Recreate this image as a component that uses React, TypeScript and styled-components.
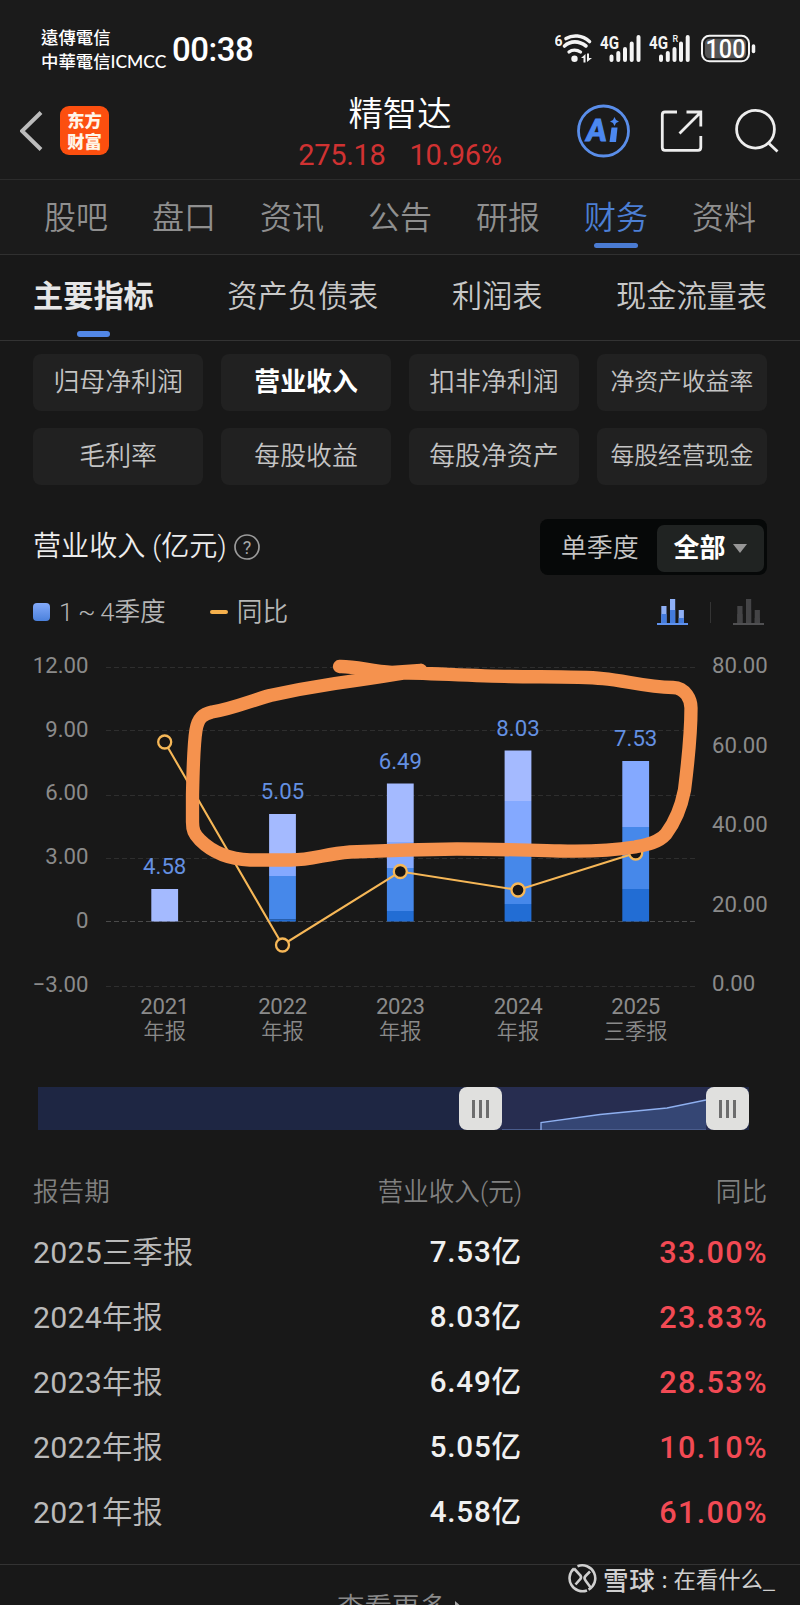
import React, { useState } from 'react'
import styled, { createGlobalStyle } from 'styled-components'

const GlobalStyle = createGlobalStyle`
  * {
    box-sizing: border-box;
  }
  body {
    margin: 0;
    background: #181818;
  }
`

const Page = styled.div`
  position: relative;
  width: 800px;
  height: 1605px;
  overflow: hidden;
  background: #181818;
  color: #c4c4c4;
  font-family: Roboto, 'Noto Sans CJK SC', sans-serif;
  font-weight: 400;
  white-space: nowrap;
`

const StatusBar = styled.div`
  display: flex;
  align-items: center;
  height: 98px;
  padding: 0 43px 0 41px;
  background: #1b1b1b;
  color: #fff;
`

const Carrier = styled.div`
  width: 131px;
  font-family: Lato, 'Noto Sans CJK TC', sans-serif;
  font-size: 17.4px;
  font-weight: 500;
  line-height: 24px;
  padding-top: 2px;
`

const Clock = styled.div`
  flex: 1;
  font-size: 33px;
  font-weight: 500;
  line-height: 40px;
  letter-spacing: -0.5px;
  padding-top: 2px;
`

const HeaderBar = styled.header`
  display: grid;
  grid-template-columns: 204px 1fr 204px;
  grid-template-rows: 65px;
  align-items: center;
  height: 82px;
  padding: 0 20px;
  background: #1b1b1b;
  border-bottom: 1px solid #2c2c2c;
`

const HeaderLeft = styled.div`
  display: flex;
  align-items: center;
  gap: 17px;
`

const BrandLogo = styled.div`
  display: grid;
  place-content: center;
  width: 49px;
  height: 49px;
  border-radius: 9px;
  padding-bottom: 2px;
  background: #fc4f0f;
  color: #fff5e8;
  font-family: 'Noto Sans CJK SC', sans-serif;
  font-size: 17.3px;
  font-weight: 900;
  line-height: 21px;
`

const StockTitle = styled.div`
  display: flex;
  flex-direction: column;
  align-items: center;
  padding-top: 7px;
`

const StockName = styled.div`
  color: #fff;
  font-size: 34.3px;
  font-weight: 350;
  line-height: 41px;
`

const StockQuote = styled.div`
  display: flex;
  gap: 24px;
  color: #d03232;
  font-size: 29px;
  font-weight: 400;
  line-height: 40px;
  letter-spacing: -0.3px;
`

const HeaderRight = styled.div`
  display: flex;
  justify-content: flex-end;
  align-items: center;
`

const MainTabs = styled.nav`
  display: flex;
  height: 75px;
  padding: 0 22px;
  background: #1b1b1b;
  border-bottom: 1px solid #303030;
`

const MainTab = styled.div<{ active?: boolean }>`
  flex: 1;
  display: flex;
  flex-direction: column;
  align-items: center;
  color: ${(props) => (props.active ? '#4c7fd4' : '#8f8f8f')};
  font-size: 32px;
  font-weight: 350;
  line-height: 63px;
  padding-top: 7px;
  height: 74px;

  &::after {
    content: '';
    width: 44px;
    height: 5px;
    margin-top: -7px;
    border-radius: 3px;
    background: ${(props) => (props.active ? '#4a7bd2' : 'transparent')};
  }
`

const SubTabs = styled.nav`
  display: flex;
  justify-content: space-between;
  height: 86px;
  padding: 5px 33px 0;
  border-bottom: 1px solid #333;
`

const SubTab = styled.div<{ active?: boolean }>`
  display: flex;
  flex-direction: column;
  align-items: center;
  color: ${(props) => (props.active ? '#e6e6e6' : '#c8c8c8')};
  font-size: 30.2px;
  font-weight: ${(props) => (props.active ? 700 : 350)};
  line-height: 74px;

  &::after {
    content: '';
    width: 33px;
    height: 6px;
    margin-top: -3px;
    border-radius: 4px;
    background: ${(props) => (props.active ? '#5288e8' : 'transparent')};
  }
`

const ChipGrid = styled.div`
  display: grid;
  grid-template-columns: repeat(4, 1fr);
  gap: 17px 17.5px;
  padding: 13px 33px 0;
`

const Chip = styled.div<{ active?: boolean; small?: boolean }>`
  height: 57px;
  border-radius: 8px;
  background: #212121;
  color: ${(props) => (props.active ? '#fff' : '#c4c4c4')};
  font-size: ${(props) => (props.small ? '23.8px' : '25.9px')};
  font-weight: ${(props) => (props.active ? 700 : 350)};
  line-height: 56px;
  text-align: center;
`

const SectionHead = styled.div`
  display: flex;
  align-items: center;
  height: 56px;
  margin: 34px 33px 0;
`

const SectionTitle = styled.div`
  color: #ececec;
  font-size: 28.1px;
  font-weight: 350;
  line-height: 54px;
  margin-right: 7px;
`

const PeriodSwitch = styled.div`
  display: flex;
  width: 227px;
  height: 56px;
  margin-left: auto;
  padding: 5.5px 3.5px 3.5px 0;
  border-radius: 8px;
  background: #060808;
`

const PeriodOption = styled.div<{ active?: boolean }>`
  display: flex;
  justify-content: center;
  align-items: center;
  gap: 7px;
  width: ${(props) => (props.active ? '107px' : '117px')};
  padding-left: ${(props) => (props.active ? '0' : '3px')};
  border-radius: 7px;
  background: ${(props) => (props.active ? '#202322' : 'transparent')};
  color: ${(props) => (props.active ? '#fff' : '#c6c6c6')};
  font-size: 26px;
  font-weight: ${(props) => (props.active ? 700 : 350)};
  line-height: 47px;
`

const Caret = styled.span`
  border: 7px solid transparent;
  border-top: 9px solid #969696;
  border-bottom: 0;
`

const Legend = styled.div`
  display: flex;
  align-items: center;
  height: 74px;
  padding: 0 33px;
  color: #b6b6b6;
  font-size: 25.7px;
  font-weight: 350;
`

const LegendText = styled.span`
  line-height: 30px;
  word-spacing: -1.6px;
  margin-top: -1px;
`

const BarSwatch = styled.span`
  width: 17px;
  height: 18px;
  margin-right: 9px;
  border-radius: 4px;
  background: linear-gradient(#83aafa, #4b81dc);
`

const LineSwatch = styled.span`
  width: 18px;
  height: 4px;
  margin: 0 9px 0 44px;
  border-radius: 2px;
  background: #f5b04c;
`

const ModeIcons = styled.div`
  display: flex;
  align-items: center;
  margin-left: auto;
  margin-right: 3px;
`

const ModeDivider = styled.span`
  width: 1px;
  height: 21px;
  margin: 0 22px;
  background: #343434;
`

const ChartSvg = styled.svg`
  display: block;
  font-size: 22.2px;
  font-weight: 400;
  fill: #8a8a8a;
`

const Slider = styled.div`
  display: flex;
  height: 43px;
  margin: 38px 51px 0 38px;
  background: #1e2643;
`

const SliderRest = styled.div`
  width: 421px;
`

const SliderWindow = styled.div`
  width: 204px;
  margin: 0 -8px;
  background: #272d50;
  box-sizing: content-box;
  padding: 0 8px;
`

const SliderHandle = styled.div`
  z-index: 1;
  display: flex;
  justify-content: center;
  align-items: center;
  gap: 4.5px;
  width: 43px;
  height: 43px;
  border-radius: 8px;
  background: #e0e0de;

  span {
    width: 2.5px;
    height: 18px;
    background: #6d6d6d;
  }
`

const ReportTable = styled.div`
  margin: 31px 33px 0;
`

const TableRow = styled.div`
  display: grid;
  grid-template-columns: 220px 269px 1fr;
  height: 65px;
  font-size: 30px;
  line-height: 69px;
`

const TableHead = styled(TableRow)`
  height: 57px;
  color: #808080;
  font-size: 25.6px;
  font-weight: 350;
  line-height: 63px;
`

const Cell = styled.div`
  text-align: right;
  &:first-child {
    text-align: left;
  }
`

const PeriodCell = styled(Cell)`
  color: #bababa;
  font-weight: 350;
  font-size: 30.3px;
  letter-spacing: 0.2px;
`

const Year = styled.span`
  font-weight: 400;
`

const AmountCell = styled(Cell)`
  color: #f0f0f0;
  font-size: 29.6px;
  font-weight: 500;
  letter-spacing: 0.8px;
`

const RatioCell = styled(Cell)`
  color: #f24a54;
  font-size: 30.7px;
  font-weight: 500;
  letter-spacing: 1.3px;
  margin-right: -1px;
`

const Footer = styled.footer`
  display: flex;
  justify-content: center;
  align-items: center;
  gap: 8px;
  height: 80px;
  margin-top: 21px;
  border-top: 1px solid #333;
  color: #8a8a8a;
  font-size: 27.5px;
  font-weight: 350;
`

const Watermark = styled.div`
  position: absolute;
  left: 568px;
  top: 1560px;
  display: flex;
  align-items: center;
  height: 36px;
  color: #cfcfcf;
  font-family: 'Noto Sans CJK SC', sans-serif;
  font-size: 22.3px;
  line-height: 35px;
`

const WatermarkBrand = styled.span`
  margin-left: 5px;
  font-size: 25.5px;
  font-weight: 500;
  letter-spacing: 0.8px;
`

const WatermarkColon = styled.span`
  width: 18px;
  text-align: center;
`

const tabs = ['股吧', '盘口', '资讯', '公告', '研报', '财务', '资料']
const subTabs = ['主要指标', '资产负债表', '利润表', '现金流量表']
const indicators = [
  '归母净利润',
  '营业收入',
  '扣非净利润',
  '净资产收益率',
  '毛利率',
  '每股收益',
  '每股净资产',
  '每股经营现金',
]

const Q1 = '#226dd4'
const Q2 = '#4688ea'
const Q3 = '#84a9ff'
const Q4 = '#a4baff'

type Segment = [top: number, color: string]
type Report = {
  year: string
  kind: string
  x: number
  value: string
  ratio: string
  pointY: number
  segments: Segment[]
}

// segments run from top to bottom, each one ends where the next one starts
const reports: Report[] = [
  { year: '2021', kind: '年报', x: 164.7, value: '4.58', ratio: '61.00%', pointY: 742, segments: [[889, Q4]] },
  {
    year: '2022',
    kind: '年报',
    x: 282.5,
    value: '5.05',
    ratio: '10.10%',
    pointY: 945,
    segments: [[814, Q4], [857, Q3], [876, Q2], [919.5, Q1]],
  },
  {
    year: '2023',
    kind: '年报',
    x: 400.3,
    value: '6.49',
    ratio: '28.53%',
    pointY: 871.5,
    segments: [[783.5, Q4], [842, Q3], [868, Q2], [911, Q1]],
  },
  {
    year: '2024',
    kind: '年报',
    x: 518,
    value: '8.03',
    ratio: '23.83%',
    pointY: 890,
    segments: [[750.5, Q4], [801, Q3], [850, Q2], [904, Q1]],
  },
  {
    year: '2025',
    kind: '三季报',
    x: 635.7,
    value: '7.53',
    ratio: '33.00%',
    pointY: 853,
    segments: [[761, Q3], [827, Q2], [889, Q1]],
  },
]

const gridLines = [667.5, 730.5, 795.5, 858.5, 921.5, 986.5]
const leftAxis = ['12.00', '9.00', '6.00', '3.00', '0', '−3.00']
const rightAxis = ['80.00', '60.00', '40.00', '20.00', '0.00']

const Chart = () => (
  <ChartSvg width="800" height="400" viewBox="0 649 800 400">
    {gridLines.map((y, index) => (
      <line
        key={y}
        x1="106"
        x2="695"
        y1={y}
        y2={y}
        stroke={index === 4 ? '#4a4a4a' : '#2e2e2e'}
        strokeDasharray="5 3"
      />
    ))}
    {leftAxis.map((label, index) => (
      <text key={label} x="88.5" y={673 + index * 63.7} textAnchor="end">
        {label}
      </text>
    ))}
    {rightAxis.map((label, index) => (
      <text key={label} x="712" y={673 + index * 79.6}>
        {label}
      </text>
    ))}
    {reports.map(({ x, segments }) =>
      segments.map(([top, color], index) => {
        const bottom = segments[index + 1] ? segments[index + 1][0] : 921.5
        return <rect key={`${x}-${top}`} x={x - 13.4} y={top} width="26.8" height={bottom - top} fill={color} />
      })
    )}
    <polyline
      points={reports.map(({ x, pointY }) => `${x},${pointY}`).join(' ')}
      fill="none"
      stroke="#f6b757"
      strokeWidth="2.1"
    />
    {reports.map(({ x, pointY }) => (
      <circle key={x} cx={x} cy={pointY} r="6.5" fill="#181514" stroke="#f6b757" strokeWidth="2.3" />
    ))}
    {reports.map(({ x, value, year, kind, segments }) => (
      <g key={year} textAnchor="middle">
        <text x={x} y={segments[0][0] - 15} fill="#6490e2">
          {value}
        </text>
        <text x={x} y="1013.5" letterSpacing="-0.3">
          {year}
        </text>
        <text x={x} y="1039" fontSize="21.3" fontWeight="350">
          {kind}
        </text>
      </g>
    ))}
    <path
      d="M339.5 666.5C355 666 370 671 392 672.5L421 670.5M392 672.5C430 673 470 676 510 676.5S580 676.5 603 678.5S645 687 673 687.5C686 688 691 700 691 708C691 735 687 770 684.500 790C681 808 675 822 666 834C658 843 645 845 635 847C610 851 580 851.500 560 851C530 850.500 500 849 457 849C420 849.500 375 851 350 852C325 854 312 860 291 860H250C225 859 209 849 200 840C194 834 192.500 830 192.500 822V795C193 770 193.500 745 196 730C198 718 203 714 212 712C232 709 250 701 270 695.500C295 690 312 687 335 683.500C360 680 380 677 398 674L421 670.500"
      fill="none"
      stroke="#f5924e"
      strokeWidth="13.3"
      strokeLinecap="round"
      strokeLinejoin="round"
    />
  </ChartSvg>
)

const BarsIcon = ({ active }: { active?: boolean }) => {
  const top = active ? '#8fb0f6' : '#444446'
  const bottom = active ? '#447bdc' : '#444446'
  return (
    <svg width="31" height="27" viewBox="0 0 31 27">
      <path d="M4.300 7H9.500V24H4.300zM13 0H18.200V24H13zM21.700 11H26.900V24H21.700z" fill={top} />
      <path d="M4.300 15H9.500V24H4.300zM13 11H18.200V24H13zM21.700 19H26.900V24H21.700z" fill={bottom} />
      <path d="M0 25H31" stroke={active ? '#5f92ee' : '#505052'} strokeWidth="2" />
    </svg>
  )
}

const StatusIcons = () => (
  <svg width="202" height="32" viewBox="0 0 202 32" fill="none" stroke="#f4f4f4">
    <g fill="#f4f4f4" stroke="none" fontWeight="700">
      <text x="-0.500" y="12.500" fontSize="15" textLength="8" lengthAdjust="spacingAndGlyphs">
        6
      </text>
      <text x="45" y="16" fontSize="19" textLength="19" lengthAdjust="spacingAndGlyphs">
        4G
      </text>
      <text x="94" y="16" fontSize="19" textLength="19" lengthAdjust="spacingAndGlyphs">
        4G
      </text>
      <text x="117.500" y="9" fontSize="9" fontWeight="500">
        R
      </text>
      <circle cx="19.500" cy="25.800" r="3.200" />
      <path d="M26 25l4.500-4v8.500h-2V25zM32 20.500v8.500l5-4h-3v-4.500z" />
    </g>
    <g strokeWidth="3.600" strokeLinecap="round">
      <path d="M11 5.500C18 1.500 27 2 34.500 8.500" />
      <path d="M9.500 13C15.500 7.500 24 7.500 31 13" />
      <path d="M14 19C17 16.500 22 16.500 25.500 19" strokeWidth="3.300" />
    </g>
    <g strokeWidth="4" strokeLinecap="round">
      <path d="M56.500 27V23.500M63.300 27V20M70 27V16M76.700 27V10.500M83.500 27V4" />
      <path d="M106 27V23.500M112.800 27V20M119.500 27V16M126 27V10.500M132.700 27V4" />
    </g>
    <rect x="147" y="2.800" width="47" height="25.500" rx="7.500" strokeWidth="2" />
    <rect x="150" y="5.800" width="41" height="19.500" rx="4.500" fill="#555" stroke="none" />
    <path d="M198.500 13V18.500" strokeWidth="3.500" strokeLinecap="round" />
    <text
      x="150.500"
      y="24.500"
      fontSize="25"
      fontWeight="500"
      textLength="40"
      lengthAdjust="spacingAndGlyphs"
      fill="#fff"
      stroke="none"
    >
      100
    </text>
  </svg>
)

const BackIcon = () => (
  <svg width="23" height="42" viewBox="0 0 23 42">
    <path d="M21 2.500L2 21L21 39.500" fill="none" stroke="#bcbcbc" strokeWidth="4" />
  </svg>
)

const HeaderIcons = () => (
  <svg width="204" height="54" viewBox="576 103.500 204 54" fill="none" stroke="#ededed" strokeWidth="2.800">
    <circle cx="603.500" cy="130.500" r="25" stroke="#5a8eea" />
    <g fill="#4c88f0" stroke="none">
      <text
        x="586.500"
        y="140.500"
        fontFamily="Lato, sans-serif"
        fontWeight="900"
        fontStyle="italic"
        fontSize="30"
        textLength="20"
        lengthAdjust="spacingAndGlyphs"
        stroke="#4c88f0"
        strokeWidth="1.200"
      >
        A
      </text>
      <path d="M611.500 127H617.500L616 141.500H609.500z" />
      <path d="M614.500 116.500l1.500 3 3 1.500-3 1.500-1.500 3-1.500-3-3-1.500 3-1.500z" />
    </g>
    <path d="M677 111.500H665Q662.300 111.500 662.300 114.200V147Q662.300 149.800 665 149.800H698Q700.800 149.800 700.800 147V135.500" />
    <path d="M686.500 111.500H700.800V126M700.500 112L679.500 133" />
    <circle cx="755.500" cy="128.700" r="18.900" />
    <path d="M769 143L777.500 151" />
  </svg>
)

const HelpIcon = () => (
  <svg width="26" height="26" viewBox="0 0 26 26" fill="none" stroke="#9b9b9b" strokeWidth="1.700">
    <circle cx="13" cy="13" r="12" />
    <text x="13" y="19.500" textAnchor="middle" fontSize="18" fontWeight="400" fill="#a8a8a8" stroke="none">
      ?
    </text>
  </svg>
)

const SnowballIcon = () => (
  <svg width="30" height="30" viewBox="0 0 30 30" fill="none" stroke="#cfcfcf" strokeWidth="2.600">
    <path d="M9.500 3.200A13 13 0 0 1 20.500 26.700M19 27.500A13 13 0 0 1 6 5.500" />
    <path d="M6 5.500L12.500 12.500Q14 15 11.500 17L7.500 21.500M22 8.500L17.500 13Q15.500 15 17.500 17.500L23 25" />
  </svg>
)

const Grip = () => (
  <SliderHandle>
    <span />
    <span />
    <span />
  </SliderHandle>
)

const App = () => {
  const [activeTab, setActiveTab] = useState('财务')
  const [activeSubTab, setActiveSubTab] = useState('主要指标')
  const [indicator, setIndicator] = useState('营业收入')

  return (
    <Page>
      <GlobalStyle />
      <StatusBar>
        <Carrier>
          遠傳電信
          <br />
          中華電信ICMCC
        </Carrier>
        <Clock>00:38</Clock>
        <StatusIcons />
      </StatusBar>
      <HeaderBar>
        <HeaderLeft>
          <BackIcon />
          <BrandLogo>
            <span>东方</span>
            <span>财富</span>
          </BrandLogo>
        </HeaderLeft>
        <StockTitle>
          <StockName>精智达</StockName>
          <StockQuote>
            <span>275.18</span>
            <span>10.96%</span>
          </StockQuote>
        </StockTitle>
        <HeaderRight>
          <HeaderIcons />
        </HeaderRight>
      </HeaderBar>
      <MainTabs>
        {tabs.map((tab) => (
          <MainTab key={tab} active={tab === activeTab} onClick={() => setActiveTab(tab)}>
            {tab}
          </MainTab>
        ))}
      </MainTabs>
      <SubTabs>
        {subTabs.map((tab) => (
          <SubTab key={tab} active={tab === activeSubTab} onClick={() => setActiveSubTab(tab)}>
            {tab}
          </SubTab>
        ))}
      </SubTabs>
      <ChipGrid>
        {indicators.map((name) => (
          <Chip key={name} active={name === indicator} small={name.length > 5} onClick={() => setIndicator(name)}>
            {name}
          </Chip>
        ))}
      </ChipGrid>
      <SectionHead>
        <SectionTitle>营业收入 (亿元)</SectionTitle>
        <HelpIcon />
        <PeriodSwitch>
          <PeriodOption>单季度</PeriodOption>
          <PeriodOption active>
            全部
            <Caret />
          </PeriodOption>
        </PeriodSwitch>
      </SectionHead>
      <Legend>
        <BarSwatch />
        <LegendText>1 ~ 4季度</LegendText>
        <LineSwatch />
        <LegendText>同比</LegendText>
        <ModeIcons>
          <BarsIcon active />
          <ModeDivider />
          <BarsIcon />
        </ModeIcons>
      </Legend>
      <Chart />
      <Slider>
        <SliderRest />
        <Grip />
        <SliderWindow>
          <svg width="204" height="43" viewBox="502 1087 204 43">
            <path d="M541 1130V1122.500L600 1114.500L667 1108L706 1100V1130z" fill="#354674" />
            <path d="M502 1129.500H706" stroke="#4a5c8c" />
            <path d="M541 1130V1122.500L600 1114.500L667 1108L706 1100" fill="none" stroke="#8fb0f0" strokeWidth="1.300" />
          </svg>
        </SliderWindow>
        <Grip />
      </Slider>
      <ReportTable>
        <TableHead>
          <Cell>报告期</Cell>
          <Cell>营业收入(元)</Cell>
          <Cell>同比</Cell>
        </TableHead>
        {[...reports].reverse().map(({ year, kind, value, ratio }) => (
          <TableRow key={year}>
            <PeriodCell>
              <Year>{year}</Year>
              {kind}
            </PeriodCell>
            <AmountCell>{value}亿</AmountCell>
            <RatioCell>{ratio}</RatioCell>
          </TableRow>
        ))}
      </ReportTable>
      <Footer>
        查看更多
        <svg width="8" height="14" viewBox="0 0 8 14">
          <path d="M0 3L8 10L0 14z" fill="#aaa" />
        </svg>
      </Footer>
      <Watermark>
        <SnowballIcon />
        <WatermarkBrand>雪球</WatermarkBrand>
        <WatermarkColon>:</WatermarkColon>
        在看什么_
      </Watermark>
    </Page>
  )
}

export default App
